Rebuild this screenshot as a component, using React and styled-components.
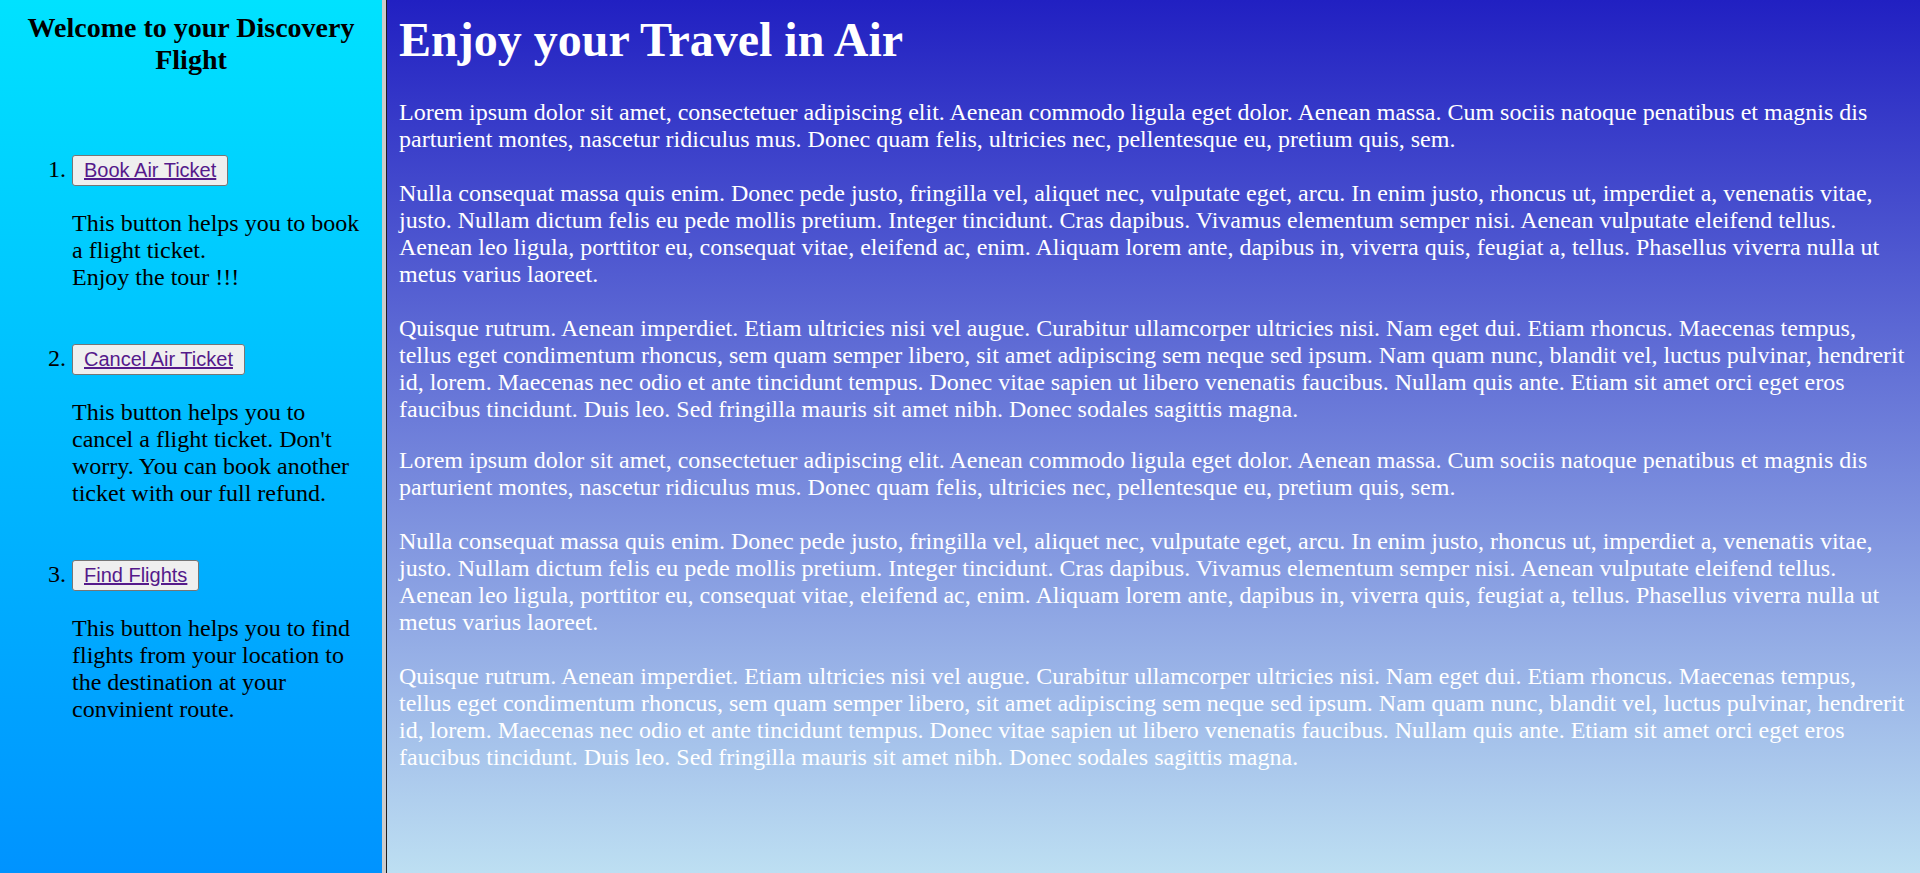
import React from "react";
import styled, { createGlobalStyle } from "styled-components";

const GlobalStyle = createGlobalStyle`
  html, body {
    margin: 0;
    padding: 0;
    height: 100%;
  }
  body {
    font-family: "Liberation Serif", "Times New Roman", serif;
  }
  #root {
    height: 100%;
  }
`;

const Frame = styled.div`
  display: flex;
  height: 100vh;
  overflow: hidden;
`;

const Sidebar = styled.aside`
  flex: 0 0 382px;
  box-sizing: border-box;
  padding: 12px;
  background: linear-gradient(to bottom, #00e2ff, #0093ff);
  color: #000;
  font-family: "Liberation Serif", "Times New Roman", serif;
`;

const Divider = styled.div`
  flex: 0 0 4px;
  background: #cbcbcb;
  border-right: 1px solid #1c1c1c;
`;

const Main = styled.main`
  flex: 1 1 auto;
  box-sizing: border-box;
  padding: 12px;
  background: linear-gradient(to bottom, #2120c2, #bddff2);
  color: #fff;
  font-family: "Liberation Serif", "Times New Roman", serif;
  overflow: hidden;
`;

const Title = styled.h3`
  margin: 0;
  font-size: 28px;
  line-height: 32px;
  font-weight: bold;
  text-align: center;
`;

const Steps = styled.ol`
  margin: 79px 0 0;
  padding-left: 60px;
  font-size: 24px;
  line-height: 27px;
`;

const Step = styled.li`
  & + & {
    margin-top: 53px;
  }
`;

const StepButton = styled.button`
  display: inline-block;
  box-sizing: border-box;
  margin: 0;
  padding: 3px 11px;
  border: 1px solid #767676;
  border-radius: 3px;
  background: #efefef;
  font-family: "Liberation Sans", Arial, sans-serif;
  font-size: 20px;
  line-height: 23px;
  cursor: pointer;
  vertical-align: baseline;
`;

const ButtonLink = styled.span`
  color: #551a8b;
  text-decoration: underline;
`;

const StepText = styled.p`
  margin: 24px 0 0;
`;

const Heading = styled.h1`
  margin: 0 0 32px;
  font-size: 48px;
  line-height: 55px;
  font-weight: bold;
`;

const Paragraph = styled.p`
  margin: 0 0 24px;
  font-size: 24px;
  line-height: 27px;
`;

const steps = [
  {
    label: "Book Air Ticket",
    text: ["This button helps you to book a flight ticket.", "Enjoy the tour !!!"],
  },
  {
    label: "Cancel Air Ticket",
    text: [
      "This button helps you to cancel a flight ticket. Don't worry. You can book another ticket with our full refund.",
    ],
  },
  {
    label: "Find Flights",
    text: [
      "This button helps you to find flights from your location to the destination at your convinient route.",
    ],
  },
];

const blocks = [
  "Lorem ipsum dolor sit amet, consectetuer adipiscing elit. Aenean commodo ligula eget dolor. Aenean massa. Cum sociis natoque penatibus et magnis dis parturient montes, nascetur ridiculus mus. Donec quam felis, ultricies nec, pellentesque eu, pretium quis, sem.",
  "Nulla consequat massa quis enim. Donec pede justo, fringilla vel, aliquet nec, vulputate eget, arcu. In enim justo, rhoncus ut, imperdiet a, venenatis vitae, justo. Nullam dictum felis eu pede mollis pretium. Integer tincidunt. Cras dapibus. Vivamus elementum semper nisi. Aenean vulputate eleifend tellus. Aenean leo ligula, porttitor eu, consequat vitae, eleifend ac, enim. Aliquam lorem ante, dapibus in, viverra quis, feugiat a, tellus. Phasellus viverra nulla ut metus varius laoreet.",
  "Quisque rutrum. Aenean imperdiet. Etiam ultricies nisi vel augue. Curabitur ullamcorper ultricies nisi. Nam eget dui. Etiam rhoncus. Maecenas tempus, tellus eget condimentum rhoncus, sem quam semper libero, sit amet adipiscing sem neque sed ipsum. Nam quam nunc, blandit vel, luctus pulvinar, hendrerit id, lorem. Maecenas nec odio et ante tincidunt tempus. Donec vitae sapien ut libero venenatis faucibus. Nullam quis ante. Etiam sit amet orci eget eros faucibus tincidunt. Duis leo. Sed fringilla mauris sit amet nibh. Donec sodales sagittis magna.",
];

function LongParagraph() {
  return (
    <Paragraph>
      {blocks.map((b, i) => (
        <React.Fragment key={i}>
          {i > 0 && (
            <>
              <br />
              <br />
            </>
          )}
          {b}
        </React.Fragment>
      ))}
    </Paragraph>
  );
}

export default function App() {
  return (
    <>
      <GlobalStyle />
      <Frame>
        <Sidebar>
          <Title>Welcome to your Discovery Flight</Title>
          <Steps>
            {steps.map((s) => (
              <Step key={s.label}>
                <StepButton type="button">
                  <ButtonLink>{s.label}</ButtonLink>
                </StepButton>
                <StepText>
                  {s.text.map((t, i) => (
                    <React.Fragment key={i}>
                      {i > 0 && <br />}
                      {t}
                    </React.Fragment>
                  ))}
                </StepText>
              </Step>
            ))}
          </Steps>
        </Sidebar>
        <Divider />
        <Main>
          <Heading>Enjoy your Travel in Air</Heading>
          <LongParagraph />
          <LongParagraph />
        </Main>
      </Frame>
    </>
  );
}
